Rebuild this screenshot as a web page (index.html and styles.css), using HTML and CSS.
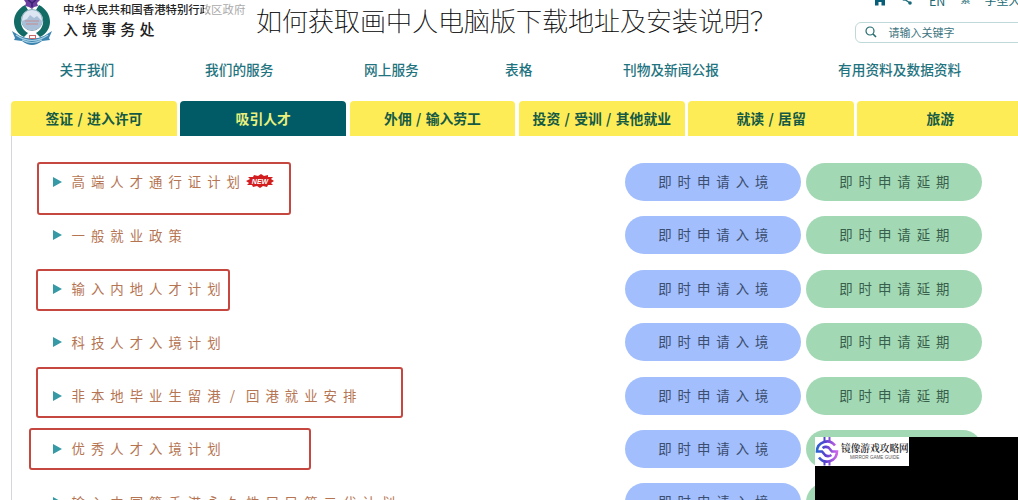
FILE: index.html
```html
<!DOCTYPE html>
<html lang="zh-CN">
<head>
<meta charset="utf-8">
<title>入境事务处</title>
<link rel="stylesheet" href="styles.css">
</head>
<body>
<div class="page">
  <header class="header">
    <svg class="emblem" width="44" height="48" viewBox="0 0 44 48">
      <path d="M14 5C-1 13 0 31 13 37l4-4C8 28 7 15 17 10zM28 5c15 8 14 26 1 32l-4-4c9-5 10-18 0-23z" fill="#136b66"/>
      <path d="M13 0h16l-3 3 1 3-4 1-2 2-3-2-4-1 1-3z" fill="#6b3fa0"/>
      <path d="M17 0l4 3 4-3M21 3v4" fill="none" stroke="#392070" stroke-width="1.500"/>
      <circle cx="21" cy="20" r="10.500" fill="#dce5f2" stroke="#86aab8"/>
      <path d="M11 21l5-2 3-4 4 3 3-2 5 5c0 6-5 9-10 9s-9-3-10-9z" fill="#a9bfd8"/>
      <path d="M14 21h14M15 24h12" stroke="#c28d91"/>
      <path d="M1 31l8 5q12 5 24 0l8-5-3 7 1 2-8 1q-10 8-20 0l-8-1 1-2z" fill="#3b84b0"/>
      <path d="M5 35q16 11 32 0M11 40q10 5 20 0" fill="none" stroke="#a9d2e5" stroke-width="1.200"/>
      <path d="M18 35h7v4h-7z" fill="#c56a68"/>
      <path d="M19 36h5v2h-5z" fill="#fff"/>
    </svg>
    <div class="names">
      <div class="gov">中华人民共和国香港特别行<span class="gov-split">政</span><span class="gov-faded">区政府</span></div>
      <div class="dept">入境事务处</div>
    </div>
    <div class="tools">
      <div class="links">
        <svg class="home" width="14" height="12" viewBox="0 0 14 12"><path d="M7 0l7 6h-2v5.500H8.500V8h-3v3.500H2V6H0z" fill="#075e78"/></svg>
        <svg class="share" width="10" height="12" viewBox="0 0 10 12"><path d="M8 2L2 6l6 4" fill="none" stroke="#196a78" stroke-width="1.300"/><circle cx="2" cy="6" r="1.800" fill="#196a78"/><circle cx="8" cy="10" r="1.800" fill="#196a78"/></svg>
        <span class="en">EN</span><span class="trad">繁</span><span class="size">字型大小</span>
      </div>
      <div class="search">
        <svg width="12" height="12" viewBox="0 0 12 12"><circle cx="5" cy="5" r="4" fill="none" stroke="#246b6e" stroke-width="1.200"/><path d="M8 8l3 3" stroke="#246b6e" stroke-width="1.600"/></svg>
        <span>请输入关键字</span>
      </div>
    </div>
  </header>
  <nav class="nav">
    <span>关于我们</span><span>我们的服务</span><span>网上服务</span><span>表格</span><span>刊物及新闻公报</span><span>有用资料及数据资料</span>
  </nav>
  <div class="tabs">
    <div class="tab">签证 / 进入许可</div>
    <div class="tab active">吸引人才</div>
    <div class="tab">外佣 / 输入劳工</div>
    <div class="tab">投资 / 受训 / 其他就业</div>
    <div class="tab">就读 / 居留</div>
    <div class="tab">旅游</div>
  </div>
  <main class="panel">
    <div class="row"><i class="arrow"></i><span class="scheme">高端人才通行证计划</span>
      <svg class="new" width="28" height="14" viewBox="0 0 28 14"><path d="M0 7l4-2-2-2 5 0 1-2 4 1 3-2 3 2 4-1 0 2 5 0-2 2 3 2-3 2 2 2-5 0-1 2-4-1-3 2-3-2-4 1-1-2-5 0 2-2z" fill="#d31e20"/><text x="14" y="9.800" text-anchor="middle" class="new-text">NEW</text></svg>
      <span class="pill blue">即时申请入境</span><span class="pill green">即时申请延期</span></div>
    <div class="row"><i class="arrow"></i><span class="scheme">一般就业政策</span><span class="pill blue">即时申请入境</span><span class="pill green">即时申请延期</span></div>
    <div class="row"><i class="arrow"></i><span class="scheme">输入内地人才计划</span><span class="pill blue">即时申请入境</span><span class="pill green">即时申请延期</span></div>
    <div class="row"><i class="arrow"></i><span class="scheme">科技人才入境计划</span><span class="pill blue">即时申请入境</span><span class="pill green">即时申请延期</span></div>
    <div class="row"><i class="arrow"></i><span class="scheme">非本地毕业生留港<span class="slash">/</span>回港就业安排</span><span class="pill blue">即时申请入境</span><span class="pill green">即时申请延期</span></div>
    <div class="row"><i class="arrow"></i><span class="scheme">优秀人才入境计划</span><span class="pill blue">即时申请入境</span><span class="pill green">即时申请延期</span></div>
    <div class="row"><i class="arrow"></i><span class="scheme">输入中国籍香港永久性居民第二代计划</span><span class="pill blue">即时申请入境</span><span class="pill green">即时申请延期</span></div>
  </main>

  <div class="mark mark-top"></div>
  <div class="mark mark-mainland"></div>
  <div class="mark mark-graduate"></div>
  <div class="mark mark-quality"></div>
  <h1 class="title">如何获取画中人电脑版下载地址及安装说明？</h1>
  <div class="footer-block">
    <div class="brand">
      <svg width="24" height="29" viewBox="0 0 24 29">
        <defs><linearGradient id="g" gradientUnits="userSpaceOnUse" x1="1" y1="0" x2="23" y2="0"><stop offset="0" stop-color="#2468d0"/><stop offset=".45" stop-color="#5a3fd0"/><stop offset="1" stop-color="#d868ec"/></linearGradient></defs>
        <g fill="none" stroke="url(#g)" stroke-width="2.600">
          <path d="M20 8.500A10 10 0 0 0 2 14.500h5l3.500 4q3 1.500 6-.5"/>
          <path d="M4 20.500A10 10 0 0 0 22 14.500h-5l-3.500-4q-3-1.500-6 .5"/>
          <path d="M9.500 0v4M14.500 0v4M9.500 24.500v4M14.500 24.500v4" stroke-width="2"/>
        </g>
      </svg>
      <div class="brand-text"><div class="brand-cn">镜像游戏攻略网</div><div class="brand-en">MIRROR GAME GUIDE</div></div>
    </div>
  </div>
</div>
</body>
</html>
```
FILE: styles.css
```css
* { box-sizing: border-box; }
body { margin: 0; background: #fff; font-family: "Noto Sans CJK SC", sans-serif; }
.page { position: relative; width: 1018px; height: 500px; overflow: hidden; }

.header { display: flex; height: 52px; padding-left: 11px; }
.emblem { flex: none; }
.names { margin-left: 8px; width: 300px; white-space: nowrap; color: #222; }
.gov { font-size: 11.4px; line-height: 18px; font-weight: 500; }
.gov-split { background: linear-gradient(90deg, #222 35%, #aaa 35%); background-clip: text; color: transparent; }
.gov-faded { color: #aaa; font-weight: 400; }
.dept { font-size: 15px; letter-spacing: 4.1px; line-height: 22px; font-weight: 500; }
.tools { margin-left: auto; width: 163px; }
.links { display: flex; height: 22px; padding-left: 18px; color: #236a73; font-size: 12px; line-height: 12px; white-space: nowrap; }
.home { margin-top: -6px; flex: none; }
.share { margin: -7px 0 0 15px; flex: none; }
.en { margin: -5px 0 0 17px; font-size: 12.5px; }
.trad { margin: -7px 0 0 15px; font-size: 10px; }
.size { margin: -6px 0 0 14px; font-size: 12px; }
.search { display: flex; align-items: center; width: 180px; height: 21px; padding: 0 0 1px 9px; gap: 11.500px; border: 1px solid #bfd8d8; border-radius: 6px; color: #3c7480; font-size: 11px; white-space: nowrap; }

.nav { display: grid; grid-template-columns: 145.500px 159px 141px 118px 215px 1fr; height: 49px; padding-left: 59.500px; color: #1f7480; font-size: 13.700px; line-height: 35px; white-space: nowrap; font-weight: 500; }

.tabs { display: grid; grid-template-columns: repeat(6, 165.800px); gap: 3.500px; padding-left: 11px; height: 35px; }
.tab { background: #fdec56; border-radius: 4px 4px 0 0; color: #155a45; text-align: center; font-size: 13.800px; word-spacing: 1.200px; font-weight: 700; line-height: 35px; white-space: nowrap; }
.tab.active { background: #005b66; color: #eaf17c; }

.panel { margin-left: 11px; border-left: 1px solid #d5d5da; padding-top: 19.300px; height: 380px; }
.row { display: flex; align-items: center; height: 53.400px; padding-left: 41px; }
.arrow { flex: none; border-left: 9px solid #359aa6; border-top: 5px solid transparent; border-bottom: 5px solid transparent; }
.scheme { margin: -1px 0 0 9.500px; font-size: 13.400px; letter-spacing: 6px; color: #b57452; white-space: nowrap; }
.slash { display: inline-block; width: 19.400px; padding-left: 3px; letter-spacing: 0; }
.new { margin-left: 0; margin-top: -2px; }
.new-text { font: italic 700 7px "Liberation Sans", sans-serif; fill: #fff; }
.pill { flex: none; width: 176px; height: 38px; border-radius: 19px; line-height: 37px; font-size: 13.400px; letter-spacing: 6px; text-align: center; padding-left: 6px; color: #3b4d70; white-space: nowrap; }
.blue { margin-left: auto; background: #a2befc; }
.green { margin-left: 5px; margin-right: 35.700px; background: #a2d9b4; color: #385e4c; }

.mark { position: absolute; border: 2px solid #c5473f; border-radius: 3px; }
.mark-top { left: 37px; top: 162px; width: 254px; height: 53px; }
.mark-mainland { left: 36px; top: 269px; width: 194px; height: 42px; }
.mark-graduate { left: 36px; top: 367px; width: 367px; height: 51px; }
.mark-quality { left: 29px; top: 428px; width: 282px; height: 42px; }

.title { position: absolute; left: 256px; top: 0; margin: 0; font-size: 26px; line-height: 40px; font-weight: 100; color: #000; white-space: nowrap; -webkit-text-stroke: 0.2px #000; }
.footer-block { position: absolute; left: 815px; top: 437px; width: 203px; height: 63px; background: #000; }
.brand { display: flex; width: 94px; height: 29px; background: #fff; overflow: hidden; }
.brand svg { flex: none; }
.brand-text { margin-left: 2px; white-space: nowrap; }
.brand-cn { font-family: "Noto Serif CJK SC", "Noto Sans CJK SC", serif; font-size: 9.700px; line-height: 12px; margin-top: 5px; font-weight: 600; color: #222; }
.brand-en { font: 4.600px/7px "Liberation Sans", sans-serif; margin-left: 9px; color: #555; }
```
